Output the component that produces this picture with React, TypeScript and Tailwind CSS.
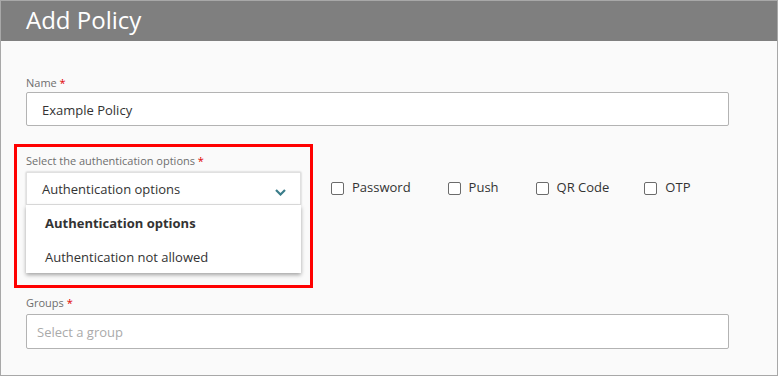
import React from 'react'

const Star = () => <span className="text-[#e00000]"> *</span>

const Check = ({ label, className }: { label: string; className?: string }) => (
  <label className={'flex items-center gap-[8px] ' + (className ?? '')}>
    <span className="block w-[13px] h-[13px] border border-[#6b6b6b] rounded-[2px] bg-white" />
    <span className="text-[13px] text-[#333] -mt-[1px]">{label}</span>
  </label>
)

export default function App() {
  return (
    <div
      className="relative w-[778px] h-[376px] border border-[#a8a8a8] bg-[#fafafa] overflow-hidden"
      style={{ fontFamily: '"Open Sans", "Noto Sans", sans-serif' }}
    >
      <header className="h-[40px] bg-[#7f7f7f] pl-[25px] flex items-center">
        <h1 className="text-[24px] leading-none text-white -mt-[2px]">Add Policy</h1>
      </header>

      <div className="px-[25px]">
        {/* name */}
        <div className="mt-[34px] text-[11px] leading-[16px] text-[#6e6e6e]">
          Name<Star />
        </div>
        <div className="mt-[1px] w-[703px] h-[34px] border border-[#b3b3b3] rounded-[2px] bg-white flex items-center pl-[15px] pt-[3px] text-[13px] text-[#333]">
          Example Policy
        </div>

        {/* auth options */}
        <div className="mt-[27px] text-[11px] leading-[16px] text-[#6e6e6e]">
          Select the authentication options<Star />
        </div>
        <div className="mt-[3px] flex items-center">
          <div className="relative w-[275px] h-[33px] bg-white border border-[#e0e0e0] shadow-[0_0_2px_rgba(0,0,0,0.25)] flex items-center pl-[15px] pt-[2px] text-[13px] text-[#333]">
            Authentication options
            <svg className="absolute right-[14px] top-[16px]" width="11" height="7" viewBox="0 0 11 7">
              <path d="M1 1 L5.5 5.5 L10 1" fill="none" stroke="#3b7d8a" strokeWidth="2.2" />
            </svg>
            <div className="absolute left-[-1px] top-[32px] w-[275px] bg-white shadow-[0_2px_4px_rgba(0,0,0,0.35)] z-10">
              <div className="h-[34px] flex items-center pl-[19px] pt-[3px] text-[13px] font-bold text-[#333]">
                Authentication options
              </div>
              <div className="h-[34px] flex items-center pl-[19px] pt-[3px] text-[13px] text-[#333]">
                Authentication not allowed
              </div>
            </div>
          </div>
          <Check label="Password" className="ml-[30px]" />
          <Check label="Push" className="ml-[37px]" />
          <Check label="QR Code" className="ml-[37px]" />
          <Check label="OTP" className="ml-[35px]" />
        </div>

        {/* groups */}
        <div className="mt-[90px] text-[11px] leading-[16px] text-[#6e6e6e]">
          Groups<Star />
        </div>
        <div className="mt-[3px] w-[703px] h-[35px] border border-[#b3b3b3] rounded-[2px] bg-white flex items-center pl-[10px] pt-[2px] text-[13px] text-[#aaa]">
          Select a group
        </div>
      </div>

      {/* annotation */}
      <div className="absolute left-[13px] top-[143px] w-[299px] h-[144px] border-[3px] border-[#ff0000] z-20 pointer-events-none" />
    </div>
  )
}
